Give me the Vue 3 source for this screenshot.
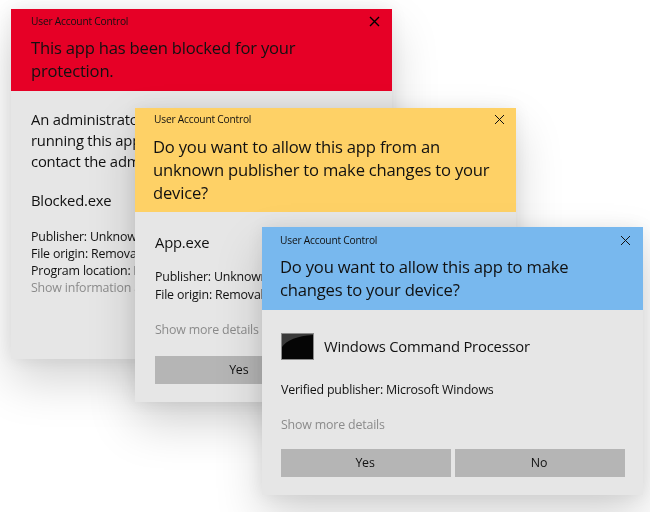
<script setup>
const closePath = 'M1 1L10 10M10 1L1 10'
</script>

<template>
  <main class="stage">
    <section class="win red">
      <header class="head">
        <div class="caption"><span>User Account Control</span>
          <svg class="close" viewBox="0 0 11 11"><path :d="closePath" /></svg>
        </div>
        <h1>This app has been blocked for your protection.</h1>
      </header>
      <div class="body">
        <p class="lead">An administrator has blocked you from<br />running this app. For more information,<br />contact the administrator.</p>
        <p class="app">Blocked.exe</p>
        <p class="meta">Publisher: Unknown<br />File origin: Removable media<br />Program location: E:\Blocked.exe</p>
        <p class="more">Show information about this</p>
      </div>
    </section>

    <section class="win yellow">
      <header class="head">
        <div class="caption"><span>User Account Control</span>
          <svg class="close" viewBox="0 0 11 11"><path :d="closePath" /></svg>
        </div>
        <h1>Do you want to allow this app from an unknown publisher to make changes to your device?</h1>
      </header>
      <div class="body">
        <p class="app">App.exe</p>
        <p class="meta">Publisher: Unknown<br />File origin: Removable media</p>
        <p class="more">Show more details</p>
        <div class="actions"><button>Yes</button><button>No</button></div>
      </div>
    </section>

    <section class="win blue">
      <header class="head">
        <div class="caption"><span>User Account Control</span>
          <svg class="close" viewBox="0 0 11 11"><path :d="closePath" /></svg>
        </div>
        <h1>Do you want to allow this app to make changes to your device?</h1>
      </header>
      <div class="body">
        <div class="appline">
          <svg class="icon" viewBox="0 0 33 27">
            <rect x="0.5" y="0.5" width="32" height="26" fill="#050505" stroke="#8a8a8a" />
            <path d="M1 14C6 7 16 3 32 2V1H1Z" fill="#3a3a3a" />
          </svg>
          <span>Windows Command Processor</span>
        </div>
        <p class="meta verified">Verified publisher: Microsoft Windows</p>
        <p class="more">Show more details</p>
        <div class="actions"><button>Yes</button><button>No</button></div>
      </div>
    </section>
  </main>
</template>

<style>
html, body { margin: 0; background: #fff; }
</style>

<style scoped>
.stage {
  position: relative;
  width: 650px;
  height: 512px;
  overflow: hidden;
  background: #fff;
  font-family: "Open Sans", "Noto Sans", sans-serif;
  color: #111;
  filter: blur(0.3px);
}
.win {
  position: absolute;
  width: 381px;
  display: flex;
  flex-direction: column;
  background: #e6e6e6;
  box-shadow: 0 22px 44px rgba(0, 0, 0, 0.17), 0 0 16px rgba(0, 0, 0, 0.07);
}
.red { left: 11px; top: 9px; height: 350px; }
.yellow { left: 135px; top: 108px; height: 294px; }
.blue { left: 262px; top: 227px; height: 268px; }
.head { padding: 4px 19px 0 20px; box-sizing: content-box; }
.red .head { background: #e60026; height: 78px; }
.yellow .head { background: #fed166; padding-left: 18px; padding-top: 3px; height: 101px; }
.blue .head { background: #78b8ee; height: 78px; padding-left: 18px; padding-top: 5px; }
.caption {
  display: flex;
  justify-content: space-between;
  align-items: center;
  height: 16px;
  font-size: 10.2px;
  letter-spacing: -0.2px;
}
.caption span { position: relative; }
.yellow .caption span { left: 1px; }
.close { width: 11px; height: 11px; margin-right: -7px; }
.yellow .close { margin-right: -8px; }
.close path { stroke: #111; stroke-width: 1; fill: none; }
.red .close path { stroke: #000; stroke-width: 1.4; }
h1 {
  margin: 7px 0 0;
  font-size: 16.6px;
  letter-spacing: -0.2px;
  line-height: 23px;
  font-weight: 400;
  width: 345px;
}
.yellow h1 { margin-top: 8px; }
.body { padding: 0 18px 0 20px; flex: 1; }
p { margin: 0; }
.lead {
  margin-top: 18px;
  font-size: 14.8px;
  letter-spacing: -0.2px;
  line-height: 21px;
  white-space: nowrap;
}
.app { font-size: 14.8px; letter-spacing: -0.2px; line-height: 20px; }
.red .app { margin-top: 18px; }
.yellow .app { margin-top: 20px; }
.meta { font-size: 12.4px; letter-spacing: -0.18px; line-height: 17px; white-space: nowrap; }
.red .meta { margin-top: 18px; }
.yellow .meta { margin-top: 16px; line-height: 18px; }
.more { font-size: 12.4px; letter-spacing: -0.18px; line-height: 17px; color: #8b8b8b; white-space: nowrap; }
.yellow .more { margin-top: 17px; }
.actions { display: flex; gap: 4px; }
.yellow .actions { margin-top: 18px; }
.blue .actions { margin-top: 16px; }
button {
  flex: 1;
  height: 28px;
  border: 0;
  padding: 0 2px 2px 0;
  background: #b5b5b5;
  color: #111;
  font: inherit;
  font-size: 12.4px;
  letter-spacing: -0.18px;
}
.appline {
  display: flex;
  align-items: center;
  gap: 10px;
  margin-top: 22px;
  height: 28px;
  font-size: 14.8px;
  letter-spacing: -0.2px;
}
.icon { width: 33px; height: 27px; }
.blue .body { padding-left: 19px; padding-right: 18px; }
.verified { margin-top: 21px; }
.blue .more { margin-top: 18px; }
</style>
